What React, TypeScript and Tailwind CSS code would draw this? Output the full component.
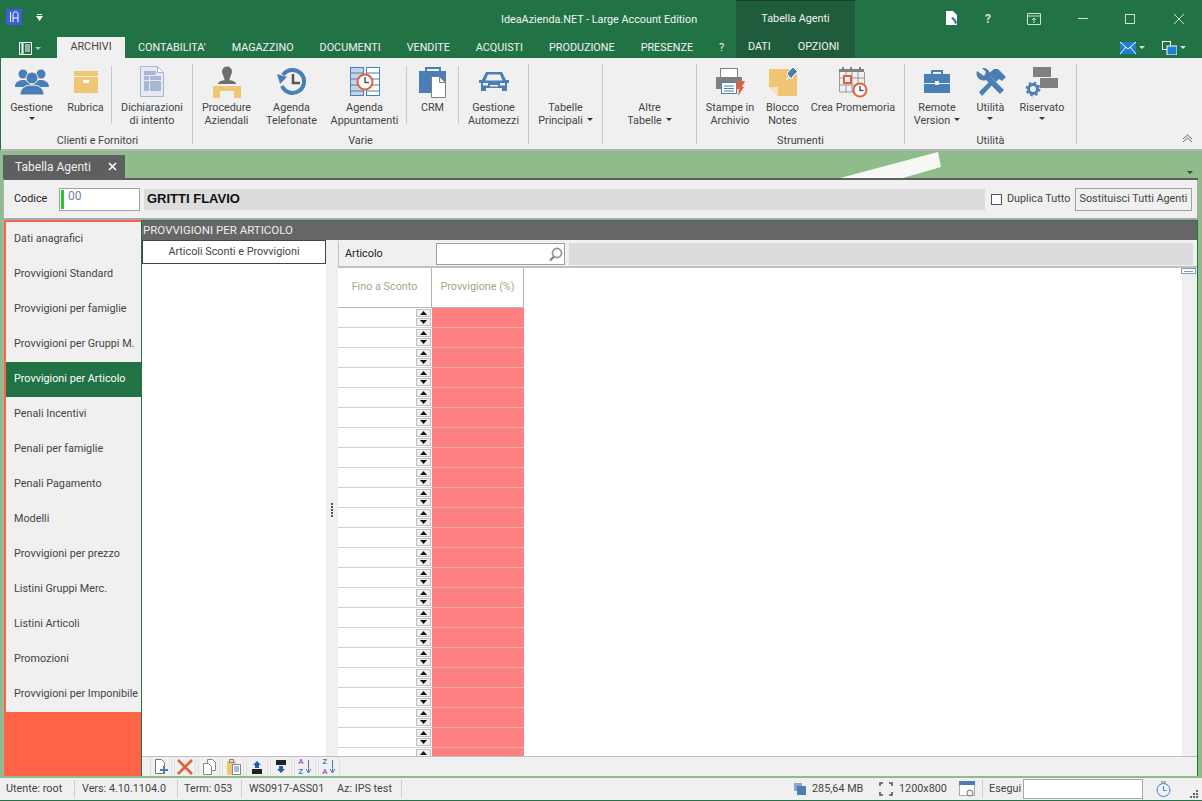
import React from 'react';

const FONT = 'font-["Roboto","Noto_Sans",sans-serif]';

const blue = '#4a7fb5';
const tan = '#f0c674';
const grey = '#808080';
const orange = '#e0603c';

function Caret({ color = '#333' }: { color?: string }) {
  return (
    <svg width="6" height="3" viewBox="0 0 6 3" className="inline-block">
      <path d="M0 0h6L3 3z" fill={color} />
    </svg>
  );
}

// icone del ribbon, tutte disegnate a mano
const icons: Record<string, React.ReactNode> = {
  gestione: (
    <svg width="34" height="30" viewBox="0 0 34 30">
      <g fill={blue}>
        <circle cx="8" cy="7" r="4.5" />
        <circle cx="26" cy="7" r="4.5" />
        <path d="M0 20c0-5 4-7 8-7s8 2 8 7zM18 20c0-5 4-7 8-7s8 2 8 7z" />
      </g>
      <circle cx="17" cy="11" r="6" fill={blue} stroke="#f0f0f0" />
      <path d="M5 28c0-7 5-10 12-10s12 3 12 10z" fill={blue} stroke="#f0f0f0" />
    </svg>
  ),
  rubrica: (
    <svg width="34" height="30" viewBox="0 0 34 30">
      <rect x="5" y="4" width="24" height="5" fill={tan} />
      <rect x="5" y="10" width="24" height="16" fill={tan} />
      <rect x="14" y="13" width="6" height="3" fill="#fff" />
    </svg>
  ),
  dichiarazioni: (
    <svg width="34" height="32" viewBox="0 0 34 32">
      <path d="M5.500.5h17l6 6v24h-23z" fill="#e4e9f4" stroke="#a8b6d4" />
      <path d="M22.500.5v6h6z" fill="#fff" stroke="#a8b6d4" />
      <g fill="#a9b7d3">
        <rect x="9" y="5" width="12" height="4" />
        <rect x="9" y="10" width="5" height="4" />
        <rect x="15" y="10" width="11" height="4" />
        <rect x="9" y="15" width="5" height="10" />
        <rect x="15" y="15" width="11" height="10" />
      </g>
    </svg>
  ),
  procedure: (
    <svg width="30" height="32" viewBox="0 0 30 32">
      <circle cx="15" cy="5.500" r="5" fill="#6e6e6e" />
      <path d="M15 3c3 0 5 3 4 6l-2 6h-4l-2-6c-1-3 1-6 4-6z" fill="#6e6e6e" />
      <path d="M6 18c0-3 5-4 9-4s9 1 9 4z" fill="#6e6e6e" />
      <path d="M1 20h28v12h-7v-7H8v7H1z" fill={tan} />
    </svg>
  ),
  telefonate: (
    <svg width="32" height="30" viewBox="0 0 32 30">
      <path d="M7 8a11.500 11.500 0 1 1-1 11" fill="none" stroke={blue} strokeWidth="4" />
      <path d="M1 7l10 3-7 7z" fill={blue} />
      <path d="M17 7v9h7" fill="none" stroke="#555" strokeWidth="2.500" />
    </svg>
  ),
  appuntamenti: (
    <svg width="30" height="30" viewBox="0 0 30 30">
      <rect x=".5" y=".5" width="13" height="28" fill="#c5d3e6" stroke={blue} />
      <rect x="16.500" y=".5" width="13" height="28" fill="#fff" stroke={blue} />
      <path d="M1 6h12M1 12h12M1 18h12M1 24h12M17 6h12M17 12h12M17 18h12M17 24h12" stroke={blue} />
      <circle cx="15" cy="15" r="7.500" fill="#fff" stroke={orange} strokeWidth="2" />
      <path d="M15 10v5.500h4" fill="none" stroke="#555" strokeWidth="1.500" />
    </svg>
  ),
  crm: (
    <svg width="30" height="32" viewBox="0 0 30 32">
      <path d="M8 5V2h14v3" fill="none" stroke={blue} strokeWidth="2" />
      <rect x="1" y="5" width="27" height="22" fill={blue} />
      <path d="M13.500 10.500h8l6 6v15h-14z" fill="#fff" stroke="#808080" />
      <path d="M21.500 10.500v6h6z" fill="#eee" stroke="#808080" />
    </svg>
  ),
  automezzi: (
    <svg width="30" height="24" viewBox="0 0 30 24">
      <path d="M7 2h16l4 8h3v3h-2v8h-5v-3H7v3H2v-8H0v-3h3z" fill={blue} />
      <path d="M9 4.500h12l2.500 6h-17z" fill="#f0f0f0" />
      <rect x="4" y="13" width="5" height="2.500" fill="#f0f0f0" />
      <rect x="21" y="13" width="5" height="2.500" fill="#f0f0f0" />
      <rect x="11" y="15" width="8" height="1.500" fill="#f0f0f0" />
    </svg>
  ),
  stampe: (
    <svg width="30" height="30" viewBox="0 0 30 30">
      <rect x="5.500" y="1.500" width="17" height="9" fill="#fff" stroke="#808080" />
      <rect x="1" y="10" width="26" height="12" fill="#808080" />
      <rect x="6.500" y="15.500" width="15" height="11" fill="#fff" stroke="#4a7fb5" />
      <path d="M9 19h10M9 21.500h10M9 24h10" stroke={blue} />
      <path d="M22 14h8l-3 6h2l-6 9 1-7h-3z" fill={orange} />
    </svg>
  ),
  blocco: (
    <svg width="32" height="32" viewBox="0 0 32 32">
      <path d="M2 3h28v27H11l-9-9z" fill={tan} />
      <path d="M2 21h9v9z" fill="#f7e2b4" />
      <path d="M21 6l5-5 5 5-2 1-3 3-1 3-2-2-4 3 3-4-2-2z" fill={blue} stroke="#fff" />
    </svg>
  ),
  promemoria: (
    <svg width="30" height="32" viewBox="0 0 30 32">
      <rect x="1" y="3" width="25" height="3" fill="#808080" />
      <path d="M5 1v4M22 1v4M13 1v4" stroke="#808080" strokeWidth="2" />
      <path d="M1.500 6v20h25V6M1.500 12h25M1.500 19h25M8 6v20M14 6v20M20 6v20" fill="none" stroke="#9a9a9a" />
      <rect x="6" y="10" width="7" height="7" fill="#fff" stroke={orange} strokeWidth="2" />
      <circle cx="22" cy="24" r="6.500" fill="#fff" stroke={orange} strokeWidth="2" />
      <path d="M22 20v4.500h3.500" fill="none" stroke="#555" strokeWidth="1.500" />
    </svg>
  ),
  remote: (
    <svg width="28" height="26" viewBox="0 0 28 26">
      <path d="M9 5V2h10v3" fill="none" stroke={blue} strokeWidth="2" />
      <path d="M1 5h26v9H1zM1 15h26v9H1z" fill={blue} />
      <rect x="12" y="12" width="4" height="4" fill="#f0f0f0" />
    </svg>
  ),
  utilita: (
    <svg width="30" height="28" viewBox="0 0 30 28">
      <path d="M1 4a7 7 0 0 0 9 9l14 14 4-4-14-14a7 7 0 0 0-8-8l4 4-2 4z" fill={blue} transform="translate(0 -1)" />
      <path d="M3 24l13-13 3 3-13 14zM12 6l6-5h4l8 8-4 4-3-2-3 3-4-4z" fill={blue} />
    </svg>
  ),
  riservato: (
    <svg width="34" height="30" viewBox="0 0 34 30">
      <rect x="8" y="0" width="18" height="10" fill={grey} />
      <rect x="15" y="11" width="18" height="10" fill={grey} />
      <circle cx="8" cy="22" r="4.500" fill="none" stroke={blue} strokeWidth="3" />
      <circle cx="8" cy="22" r="6.500" fill="none" stroke={blue} strokeWidth="1.800" strokeDasharray="2.500 2.600" />
    </svg>
  ),
};

type Item = { icon?: string; lines: string[]; w: number; caret?: 'below' | 'inline'; sep?: boolean };

const groups: { w: number; label: string; items: Item[] }[] = [
  {
    w: 189,
    label: 'Clienti e Fornitori',
    items: [
      { icon: 'gestione', lines: ['Gestione'], w: 57, caret: 'below' },
      { icon: 'rubrica', lines: ['Rubrica'], w: 51, sep: true },
      { icon: 'dichiarazioni', lines: ['Dichiarazioni', 'di intento'], w: 80 },
    ],
  },
  {
    w: 335,
    label: 'Varie',
    items: [
      { icon: 'procedure', lines: ['Procedure', 'Aziendali'], w: 67 },
      { icon: 'telefonate', lines: ['Agenda', 'Telefonate'], w: 63 },
      { icon: 'appuntamenti', lines: ['Agenda', 'Appuntamenti'], w: 83, sep: true },
      { icon: 'crm', lines: ['CRM'], w: 51, sep: true },
      { icon: 'automezzi', lines: ['Gestione', 'Automezzi'], w: 69 },
    ],
  },
  { w: 73, label: '', items: [{ lines: ['Tabelle', 'Principali'], w: 73, caret: 'inline' }] },
  { w: 93, label: '', items: [{ lines: ['Altre', 'Tabelle'], w: 93, caret: 'inline' }] },
  {
    w: 207,
    label: 'Strumenti',
    items: [
      { icon: 'stampe', lines: ['Stampe in', 'Archivio'], w: 66 },
      { icon: 'blocco', lines: ['Blocco', 'Notes'], w: 39 },
      { icon: 'promemoria', lines: ['Crea Promemoria'], w: 102 },
    ],
  },
  {
    w: 171,
    label: 'Utilità',
    items: [
      { icon: 'remote', lines: ['Remote', 'Version'], w: 64, caret: 'inline' },
      { icon: 'utilita', lines: ['Utilità'], w: 43, caret: 'below' },
      { icon: 'riservato', lines: ['Riservato'], w: 60, caret: 'below' },
    ],
  },
];

const tabs = ['CONTABILITA\'', 'MAGAZZINO', 'DOCUMENTI', 'VENDITE', 'ACQUISTI', 'PRODUZIONE', 'PRESENZE', '?'];

const menu = [
  'Dati anagrafici',
  'Provvigioni Standard',
  'Provvigioni per famiglie',
  'Provvigioni per Gruppi M.',
  'Provvigioni per Articolo',
  'Penali Incentivi',
  'Penali per famiglie',
  'Penali Pagamento',
  'Modelli',
  'Provvigioni per prezzo',
  'Listini Gruppi Merc.',
  'Listini Articoli',
  'Promozioni',
  'Provvigioni per Imponibile',
];

const rows = Array.from({ length: 23 }, (_, i) => i);

function RibbonItem({ item }: { item: Item }) {
  return (
    <>
      <div className="flex flex-col items-center shrink-0" style={{ width: item.w }}>
        <div className="h-[36px] flex items-center justify-center">{item.icon ? icons[item.icon] : null}</div>
        <div className="mt-[1px] text-center leading-[13px] text-[#444] whitespace-nowrap">
          {item.lines.map((l, i) => (
            <div key={l}>
              {l}
              {item.caret === 'inline' && i === item.lines.length - 1 && (
                <span className="ml-[4px] relative top-[-2px]"><Caret /></span>
              )}
            </div>
          ))}
          {item.caret === 'below' && <div className="flex justify-center pt-[3px]"><Caret /></div>}
        </div>
      </div>
      {item.sep && <div className="w-px h-[58px] bg-[#c8c8c8] mt-[2px] shrink-0" />}
    </>
  );
}

function ToolIcon({ children }: { children: React.ReactNode }) {
  return <div className="w-[22px] h-[19px] border-l border-r border-[#e0e0e0] mr-[2px] flex items-center justify-center">{children}</div>;
}

export default function App() {
  return (
    <div className={`${FONT} w-[1202px] h-[801px] overflow-hidden flex flex-col bg-[#8fbc8b] text-[10.800px] text-[#444] antialiased`}>
      {/* barra titolo + tab */}
      <div className="h-[58px] bg-[#217346] flex shrink-0">
        <div className="w-[736px] shrink-0 flex flex-col">
          <div className="h-[37px] flex items-center relative">
            <div className="ml-[6px] w-[16px] h-[16px] bg-[#3a5fd8] mt-[-3px] flex items-center justify-center">
              <svg width="10" height="12" viewBox="0 0 10 12"><path d="M1.500 1v10M4 11V3c0-3 5-3 5 0v8M4 7h5" fill="none" stroke="#fff" /></svg>
            </div>
            <div className="ml-[14px] mt-[-3px]">
              <svg width="7" height="7" viewBox="0 0 7 7"><path d="M1 0h5v1H1zM0 2h7L3.500 7z" fill="#fff" /></svg>
            </div>
            <div className="absolute left-[501px] top-[12px] text-[#f4f4f4] whitespace-nowrap">IdeaAzienda.NET - Large Account Edition</div>
          </div>
          <div className="h-[21px] flex items-end text-[#f2f2f2]">
            <div className="ml-[19px] w-[38px] shrink-0 h-[20px] flex items-center gap-[2px]">
              <svg width="14" height="13" viewBox="0 0 14 13"><path d="M.5.5h12v12H.5z" fill="none" stroke="#fff" /><path d="M3.500 0v13" stroke="#fff" strokeWidth="2" /><path d="M6 3h5M6 5h5M6 7h5M6 9h5" stroke="#fff" /></svg>
              <Caret color="#bbb" />
            </div>
            <div className="h-[21px] w-[68px] shrink-0 bg-[#f0f0f0] text-[#444] flex items-center justify-center">ARCHIVI</div>
            {tabs.map((t) => (
              <div key={t} className="px-[13px] h-[20px] flex items-center whitespace-nowrap">{t}</div>
            ))}
          </div>
        </div>
        <div className="w-[119px] shrink-0 bg-[#1f5c3c] border-t border-[#173f2a] flex flex-col text-[#f2f2f2]">
          <div className="h-[36px] flex items-center justify-center">Tabella Agenti</div>
          <div className="h-[21px] flex items-center">
            <span className="ml-[12px]">DATI</span>
            <span className="ml-[27px]">OPZIONI</span>
          </div>
        </div>
        <div className="flex-1 flex flex-col">
          <div className="h-[37px] flex items-center pl-[90px] text-[#cfe0d5]">
            <div className="w-[20px] mt-[-1px]">
              <svg width="14" height="16" viewBox="0 0 14 16"><path d="M1 1h7l4 4v10H1z" fill="#fff" /><path d="M6 8l3 3 1 3 2-1-1-3-3-3z" fill="#2f6fc0" /></svg>
            </div>
            <span className="ml-[20px] text-[12px] font-bold w-[21px]">?</span>
            <div className="ml-[21px] mt-[1px] w-[27px]">
              <svg width="14" height="12" viewBox="0 0 14 12"><path d="M.5.5h13v11H.5zM1 3h12M7 10V5M5 7l2-2 2 2" fill="none" stroke="#cfe0d5" /></svg>
            </div>
            <div className="ml-[24px] w-[33px]"><div className="w-[10px] h-px bg-[#cfe0d5]" /></div>
            <div className="ml-[14px] w-[34px]"><div className="w-[10px] h-[10px] border border-[#cfe0d5]" /></div>
            <div className="ml-[15px]">
              <svg width="10" height="10" viewBox="0 0 10 10"><path d="M0 0l10 10M10 0L0 10" stroke="#cfe0d5" /></svg>
            </div>
          </div>
          <div className="h-[21px] flex items-center pl-[265px]">
            <svg width="16" height="12" viewBox="0 0 16 12"><rect width="16" height="12" fill="#1c7fd0" /><path d="M0 0l8 7 8-7M0 12l6-7M16 12l-6-7" fill="none" stroke="#fff" /></svg>
            <span className="ml-[3px] mr-[17px] flex"><Caret color="#ddd" /></span>
            <svg width="15" height="14" viewBox="0 0 15 14"><rect x=".5" y=".5" width="8" height="8" fill="none" stroke="#fff" /><rect x="5" y="5" width="10" height="9" fill="#1c7fd0" stroke="#fff" /></svg>
            <span className="ml-[3px] flex"><Caret color="#ddd" /></span>
          </div>
        </div>
      </div>

      {/* ribbon */}
      <div className="h-[93px] bg-[#f0f0f0] border-l border-[#217346] border-b-2 border-b-[#b4b4b4] flex pl-[2px] pt-[6px] relative shrink-0">
        {groups.map((g, i) => (
          <React.Fragment key={i}>
            <div className="flex flex-col shrink-0" style={{ width: g.w }}>
              <div className="flex h-[69px]">
                {g.items.map((it) => (
                  <RibbonItem key={it.lines.join()} item={it} />
                ))}
              </div>
              <div className="text-center leading-[14px] mt-[1px]">{g.label}</div>
            </div>
            <div className="w-px h-[80px] bg-[#c8c8c8] shrink-0" />
          </React.Fragment>
        ))}
        <div className="absolute right-[9px] top-[76px]">
          <svg width="11" height="9" viewBox="0 0 11 9"><path d="M1 5l4.500-4L10 5M1 8l4.500-4L10 8" fill="none" stroke="#666" /></svg>
        </div>
      </div>

      {/* striscia tab documenti */}
      <div className="h-[27px] flex items-end pl-[3px] relative shrink-0">
        <div className="absolute left-[840px] top-0">
          <svg width="104" height="27" viewBox="0 0 104 27"><path d="M0 27L98 1l3 15-38 11z" fill="#f5f8f3" /></svg>
        </div>
        <div className="w-[122px] h-[23px] bg-[#5f5f5f] text-[#f0f0f0] text-[12px] flex items-center pl-[12px]">
          <span className="w-[79px]">Tabella Agenti</span>
          <svg className="ml-[14px]" width="9" height="9" viewBox="0 0 9 9"><path d="M1 1l7 7M8 1L1 8" stroke="#fff" strokeWidth="1.600" /></svg>
        </div>
        <div className="absolute right-[9px] top-[13px]"><Caret color="#444" /></div>
      </div>

      {/* contenuto */}
      <div className="flex-1 min-h-0 ml-[3px] mr-[4px] flex flex-col border-t-2 border-[#606060] border-l border-l-[#b0b0b0] bg-[#f0f0f0]">
        <div className="h-[40px] shrink-0 flex items-center border-b-2 border-r border-[#a8a8a8] relative">
          <span className="ml-[10px] w-[45px] text-[#222]">Codice</span>
          <div className="w-[81px] h-[23px] bg-white border border-[#a0a0a0] flex pl-[1px] py-[1px]">
            <div className="w-[3px] bg-[#2ec13a]" />
            <span className="ml-[4px] leading-[13px] text-[#6e86a8] text-[12px]">00</span>
          </div>
          <div className="ml-[4px] w-[841px] h-[21px] bg-[#dcdcdc] flex items-center pl-[3px] font-['Liberation_Sans',sans-serif] font-bold text-[13px] text-[#111]">GRITTI FLAVIO</div>
          <div className="ml-[6px] w-[11px] h-[11px] bg-white border border-[#555]" />
          <span className="ml-[5px] w-[68px] text-[#444] whitespace-nowrap">Duplica Tutto</span>
          <div className="w-[117px] h-[23px] border border-[#a0a0a0] flex items-center justify-center whitespace-nowrap">Sostituisci Tutti Agenti</div>
        </div>

        <div className="flex-1 min-h-0 flex">
          {/* menu laterale */}
          <div className="w-[138px] shrink-0 bg-[#ff6347] pl-[2px] pt-[2px] flex flex-col border-r border-[#217346]">
            {menu.map((m) => (
              <div
                key={m}
                className={`h-[35px] shrink-0 flex items-center pl-[8px] whitespace-nowrap ${m === 'Provvigioni per Articolo' ? 'bg-[#217346] text-white' : 'bg-[#f0f0f0] text-[#444]'}`}
              >
                {m}
              </div>
            ))}
          </div>

          <div className="flex-1 min-w-0 flex flex-col border-r border-[#217346]">
            <div className="h-[20px] shrink-0 bg-[#666] text-[#eee] text-[11.500px] flex items-center pl-[1px] border-t border-[#217346]">PROVVIGIONI PER ARTICOLO</div>
            <div className="flex-1 min-h-0 flex">
              {/* albero */}
              <div className="w-[184px] shrink-0 bg-white">
                <div className="h-[24px] border border-[#444] flex items-center justify-center pt-[1px]">Articoli Sconti e Provvigioni</div>
              </div>
              {/* splitter */}
              <div className="w-[12px] shrink-0 flex flex-col items-center justify-center gap-[1px] pt-[24px]">
                {[0, 1, 2, 3, 4].map((i) => (
                  <div key={i} className="w-[2px] h-[2px] bg-[#555]" />
                ))}
              </div>
              <div className="flex-1 min-w-0 flex flex-col">
                <div className="h-[28px] shrink-0 flex items-center border-l border-b-2 border-[#c0c0c0] border-t-2 border-t-[#f0f0f0]">
                  <span className="ml-[6px] w-[91px] text-[#222]">Articolo</span>
                  <div className="w-[129px] h-[22px] bg-white border border-[#a0a0a0] flex items-center justify-end pr-[1px]">
                    <svg width="15" height="15" viewBox="0 0 15 15"><circle cx="9" cy="6" r="4.500" fill="none" stroke="#999" strokeWidth="1.800" /><path d="M6 9.500L2 13.500" stroke="#888" strokeWidth="2.400" /></svg>
                  </div>
                  <div className="ml-[4px] w-[624px] h-[22px] bg-[#dcdcdc]" />
                </div>
                {/* griglia */}
                <div className="flex-1 min-h-0 flex flex-col relative">
                  <div className="absolute right-[1px] top-[0px] w-[15px] h-[6px] bg-white border border-[#7f9db9] flex items-center justify-center">
                    <div className="w-[9px] h-px bg-[#7f9db9]" />
                  </div>
                  <div className="flex-1 min-h-0 flex">
                    <div className="flex-1 min-w-0 bg-white flex overflow-hidden">
                      <div className="w-[186px] shrink-0 flex flex-col">
                        <div className="h-[40px] shrink-0 flex border-b border-[#a8b8c8]">
                          <div className="w-[94px] border-r border-[#a8b8c8] flex items-center justify-center text-[#a6a68a]">Fino a Sconto</div>
                          <div className="w-[92px] border-r border-[#a8b8c8] flex items-center justify-center text-[#a6a68a]">Provvigione (%)</div>
                        </div>
                        {rows.map((r) => (
                          <div key={r} className="h-[20px] shrink-0 flex">
                            <div className="w-[94px] border-b border-[#d0d0d0] flex flex-col items-end pr-[1px] pt-[1px] gap-[1px]">
                              <div className="w-[15px] h-[8px] bg-[#f0f0f0] border border-[#c0c0c0] flex items-center justify-center">
                                <svg width="7" height="4" viewBox="0 0 7 4"><path d="M0 4h7L3.500 0z" fill="#111" /></svg>
                              </div>
                              <div className="w-[15px] h-[8px] bg-[#f0f0f0] border border-[#c0c0c0] flex items-center justify-center">
                                <svg width="7" height="4" viewBox="0 0 7 4"><path d="M0 0h7L3.500 4z" fill="#111" /></svg>
                              </div>
                            </div>
                            <div className="w-[92px] bg-[#ff8080] border-b border-[#e8b0b0]" />
                          </div>
                        ))}
                      </div>
                    </div>
                    <div className="w-[15px] shrink-0 bg-[#f0f0f0]" />
                  </div>
                </div>
              </div>
            </div>
            {/* toolbar griglia */}
            <div className="h-[20px] shrink-0 border-t border-[#c0c0c0] flex pl-[8px]">
              <ToolIcon>
                <svg width="16" height="17" viewBox="0 0 16 17"><path d="M2.500 1.500h6l3 3v11h-9z" fill="#fff" stroke="#777" /><path d="M11 8v8M7 12h8" stroke={blue} strokeWidth="2" /></svg>
              </ToolIcon>
              <ToolIcon>
                <svg width="16" height="16" viewBox="0 0 16 16"><path d="M1 1l14 14M15 1L1 15" stroke={orange} strokeWidth="2.600" /></svg>
              </ToolIcon>
              <ToolIcon>
                <svg width="14" height="16" viewBox="0 0 14 16"><path d="M5.500.5h5l3 3v8h-8z" fill="#fff" stroke="#888" /><path d="M1.500 4.500h5l3 3v8h-8z" fill="#fff" stroke="#888" /></svg>
              </ToolIcon>
              <ToolIcon>
                <svg width="15" height="16" viewBox="0 0 15 16"><path d="M1 2h9v14H1z" fill={tan} /><rect x="3.500" y="0.500" width="4" height="3" fill="#ddd" stroke="#888" /><rect x="6.500" y="5.500" width="8" height="10" fill="#fff" stroke="#888" /><path d="M8 8h5M8 10h5M8 12h5" stroke={blue} /></svg>
              </ToolIcon>
              <ToolIcon>
                <svg width="12" height="14" viewBox="0 0 12 14"><path d="M6 1l4 4H8v3H4V5H2z" fill="#1f5fa8" /><rect x="1" y="9" width="10" height="5" fill="#222" /></svg>
              </ToolIcon>
              <ToolIcon>
                <svg width="12" height="14" viewBox="0 0 12 14"><rect x="1" y="0" width="10" height="5" fill="#222" /><path d="M6 13l4-4H8V6H4v3H2z" fill="#1f5fa8" /></svg>
              </ToolIcon>
              <ToolIcon>
                <span className="flex items-center text-[8px] leading-[10px] font-bold">
                  <span className="flex flex-col"><span className="text-[#b060c8]">A</span><span className="text-[#4a7fb5]">Z</span></span>
                  <svg className="ml-[1px]" width="7" height="16" viewBox="0 0 7 16"><path d="M3.500 1v12M1 10l2.500 4L6 10" fill="none" stroke={blue} /></svg>
                </span>
              </ToolIcon>
              <ToolIcon>
                <span className="flex items-center text-[8px] leading-[10px] font-bold">
                  <span className="flex flex-col"><span className="text-[#4a7fb5]">Z</span><span className="text-[#b060c8]">A</span></span>
                  <svg className="ml-[1px]" width="7" height="16" viewBox="0 0 7 16"><path d="M3.500 1v12M1 10l2.500 4L6 10" fill="none" stroke={blue} /></svg>
                </span>
              </ToolIcon>
            </div>
          </div>
        </div>
      </div>

      {/* barra di stato */}
      <div className="h-[23px] shrink-0 mt-[2px] bg-[#f0f0f0] border-b border-[#217346] flex items-center relative text-[#444] whitespace-nowrap">
        <span className="ml-[6px] w-[68px]">Utente: root</span>
        <div className="w-px h-[18px] bg-[#d0d0d0]" />
        <span className="ml-[7px] w-[95px]">Vers: 4.10.1104.0</span>
        <div className="w-px h-[18px] bg-[#d0d0d0]" />
        <span className="ml-[6px] w-[57px]">Term: 053</span>
        <div className="w-px h-[18px] bg-[#d0d0d0]" />
        <span className="ml-[7px] w-[88px]">WS0917-ASS01</span>
        <span className="w-[64px]">Az: IPS test</span>
        <div className="w-px h-[18px] bg-[#d0d0d0]" />
        <div className="ml-[392px] w-[18px]">
          <svg width="12" height="12" viewBox="0 0 12 12"><rect width="8" height="8" fill="#8aa8cc" /><rect x="3" y="3" width="9" height="9" fill="#4a7fb5" /></svg>
        </div>
        <span className="w-[67px]">285,64 MB</span>
        <div className="w-[20px]">
          <svg width="14" height="14" viewBox="0 0 14 14"><path d="M1 4V1h3M10 1h3v3M13 10v3h-3M4 13H1v-3" fill="none" stroke="#555" strokeWidth="1.600" /></svg>
        </div>
        <span className="w-[60px]">1200x800</span>
        <div className="w-[23px]">
          <svg width="16" height="16" viewBox="0 0 16 16"><rect x=".5" y=".5" width="15" height="14" fill="#fff" stroke="#9ab" /><rect width="16" height="4" fill="#4a7fb5" /><circle cx="11" cy="12" r="3" fill="#f0f0f0" stroke="#777" /></svg>
        </div>
        <div className="w-px h-[18px] bg-[#d0d0d0]" />
        <span className="ml-[6px] w-[34px]">Esegui</span>
        <div className="w-[120px] h-[20px] bg-white border border-[#a8a8a8]" />
        <div className="ml-[13px]">
          <svg width="15" height="17" viewBox="0 0 15 17"><circle cx="7.500" cy="9" r="6.500" fill="#eaf1f8" stroke={blue} /><path d="M5 1h5M7.500 5v4.500h3" fill="none" stroke="#5a7a9a" /></svg>
        </div>
        <div className="absolute right-[3px] bottom-[1px]">
          <svg width="9" height="9" viewBox="0 0 9 9"><path d="M6 0h2v2H6zM3 3h2v2H3zM6 3h2v2H6zM0 6h2v2H0zM3 6h2v2H3zM6 6h2v2H6z" fill="#666" /></svg>
        </div>
      </div>
    </div>
  );
}
